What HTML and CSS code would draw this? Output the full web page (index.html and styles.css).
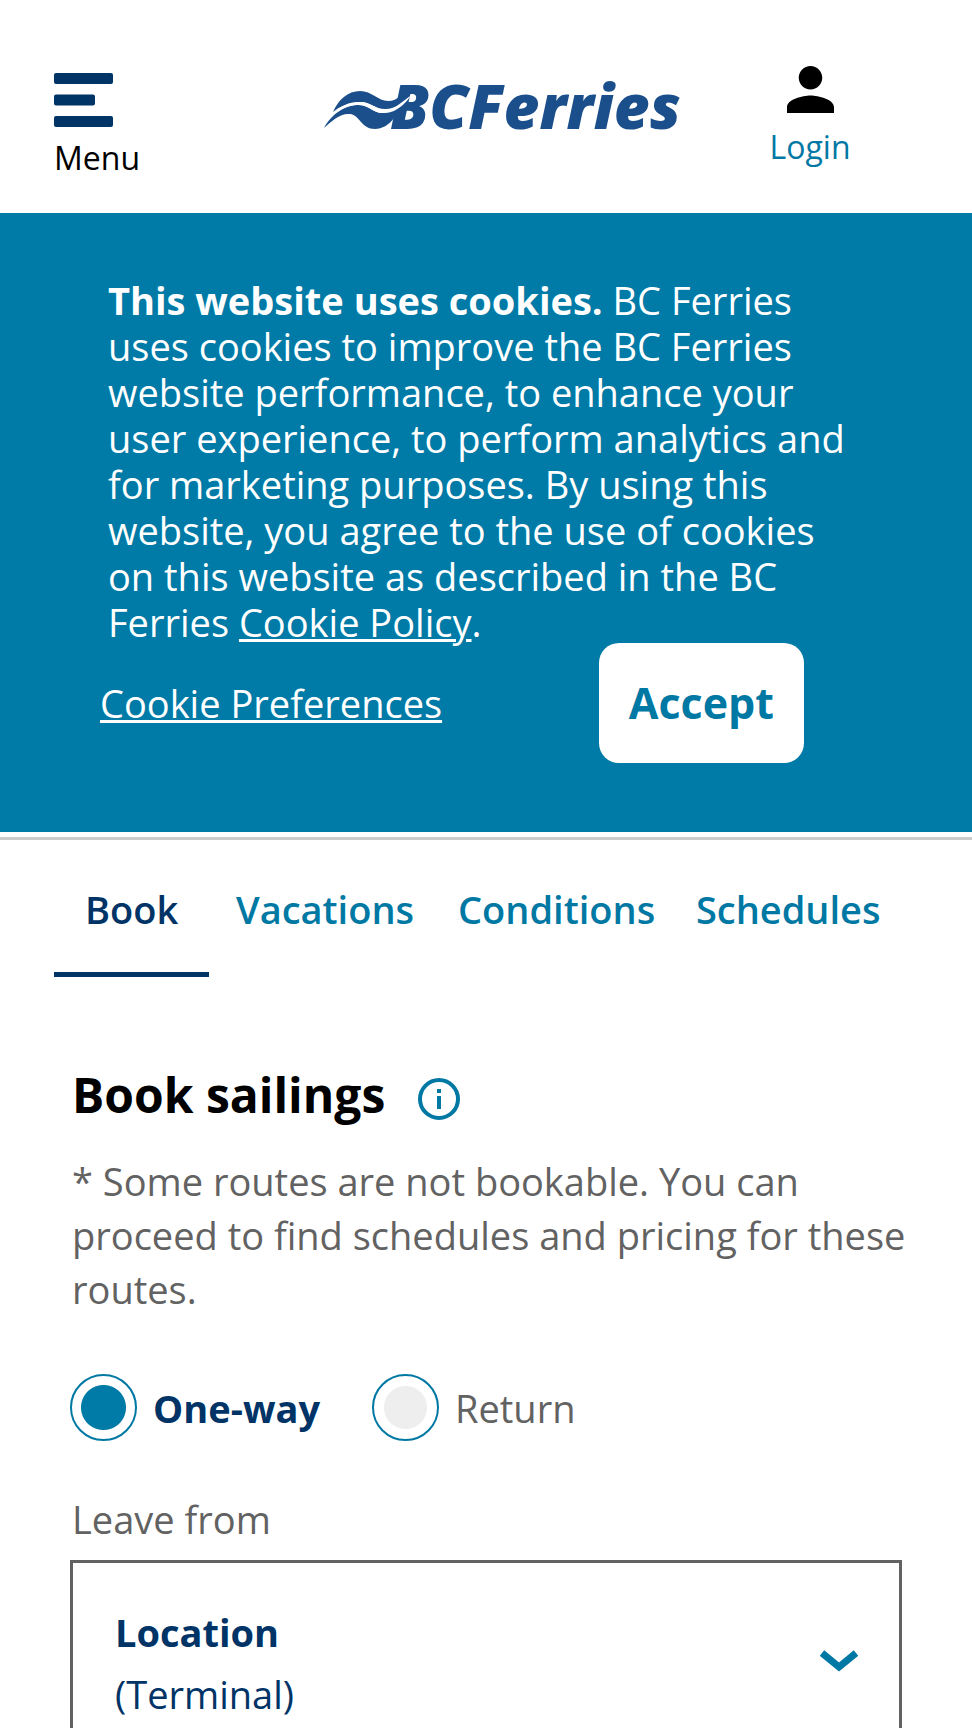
FILE: index.html
```html
<!DOCTYPE html>
<html lang="en">
<head>
  <meta charset="UTF-8">
  <title>BC Ferries</title>
  <meta name="viewport" content="width=device-width, initial-scale=1.0">
  <link rel="stylesheet" href="styles.css">
</head>
<body>

  <header class="header">
    <button type="button" class="menu-btn">
      <svg width="59" height="54" viewBox="0 0 59 54" fill="#003366" aria-hidden="true">
        <rect width="59" height="11" rx="2"/>
        <rect y="21.5" width="41" height="11" rx="2"/>
        <rect y="43" width="59" height="11" rx="2"/>
      </svg>
      <span>Menu</span>
    </button>

    <a href="#" class="logo" aria-label="BC Ferries">
      <svg width="360" height="86" viewBox="0 -16 360 86" fill="#1b4f8b" aria-hidden="true">
        <text class="logo-text" x="68" y="52">BCFerries</text>
        <!-- upper wave -->
        <path d="M11 35 C16 23 26 14 38 14 C50 14 56 24 66 24 C71 24 75 22 78 19 L88 20 C82 24 76 32 65 33 C53 33 49 25 38 25 C26 25 17 30 11 35 Z"/>
        <!-- lower wave -->
        <path d="M2 51 C9 38 22 28 36 28 C47 28 51 36 60 36 C68 36 74 32 80 27 L78 42 L76 52 L71 51 L72 41 C67 48 60 52 53 52 C39 52 38 38 28 37 C18 36 10 44 2 51 Z"/>
        <!-- gap between the waves, cuts into the B -->
        <path d="M10 38 C17 30 27 25 38 25 C49 25 53 32 63 32 C75 32 80 24 90 18 C85 23 77 36 62 36 C50 36 48 28 36 28 C25 28 17 34 10 38 Z" fill="#fff"/>
      </svg>
    </a>

    <a href="#" class="login">
      <svg width="47" height="47" viewBox="4 4 16 16" aria-hidden="true">
        <path d="M12 12c2.21 0 4-1.79 4-4s-1.79-4-4-4-4 1.79-4 4 1.79 4 4 4zm0 2c-2.67 0-8 1.34-8 4v2h16v-2c0-2.66-5.33-4-8-4z"/>
      </svg>
      <span>Login</span>
    </a>
  </header>

  <section class="cookies">
    <p><strong>This website uses cookies.</strong> BC Ferries uses cookies to improve the BC Ferries website performance, to enhance your user experience, to perform analytics and for marketing purposes. By using this website, you agree to the use of cookies on this website as described in the BC Ferries <a href="#">Cookie Policy</a>.</p>
    <div class="cookie-actions">
      <a href="#">Cookie Preferences</a>
      <button type="button" class="accept">Accept</button>
    </div>
  </section>

  <nav class="tabs">
    <a href="#" class="tab active">Book</a>
    <a href="#" class="tab">Vacations</a>
    <a href="#" class="tab">Conditions</a>
    <a href="#" class="tab">Schedules</a>
  </nav>

  <main class="booking">
    <div class="title">
      <h1>Book sailings</h1>
      <button type="button" class="info" aria-label="Booking information">
        <svg width="42" height="42" viewBox="0 0 42 42" fill="#0078a4" aria-hidden="true">
          <circle cx="21" cy="21" r="19" fill="none" stroke="#0078a4" stroke-width="4"/>
          <rect x="19" y="11" width="4" height="4"/>
          <rect x="19" y="18" width="4" height="13"/>
        </svg>
      </button>
    </div>
    <p class="note">* Some routes are not bookable. You can proceed to find schedules and pricing for these routes.</p>

    <div class="trip">
      <input type="radio" name="trip" id="oneway" checked>
      <label for="oneway">One-way</label>
      <input type="radio" name="trip" id="return">
      <label for="return">Return</label>
    </div>

    <label class="field-label" for="leave">Leave from</label>
    <button type="button" class="dropdown" id="leave" aria-haspopup="listbox">
      <span class="place">
        <strong>Location</strong>
        <span>(Terminal)</span>
      </span>
      <svg width="38" height="22" viewBox="0 0 38 22" aria-hidden="true">
        <path d="M2 3 L19 17 L36 3" fill="none" stroke="#0078a4" stroke-width="7"/>
      </svg>
    </button>
  </main>

</body>
</html>
```
FILE: styles.css
```css
* {
  box-sizing: border-box;
}
body {
  margin: 0;
  font-family: "Open Sans", sans-serif;
  font-size: 38px;
  background: #fff;
  color: #000;
}
h1, p {
  margin: 0;
}
a {
  color: #0078a4;
}
button {
  font: inherit;
  color: inherit;
  background: none;
  border: 0;
  padding: 0;
  cursor: pointer;
}
svg {
  display: block;
}

/* header */
.header {
  display: grid;
  grid-template-columns: 1fr 2fr 1fr;
  align-items: start;
  padding: 60px 54px 33px;
  font-size: 32px;
  line-height: 44px;
}
.menu-btn {
  justify-self: start;
  text-align: left;
  padding-top: 13px;
}
.menu-btn span {
  display: block;
  margin-top: 9px;
}
.logo {
  justify-self: center;
  padding: 1px 0 0 32px;
}
.logo-text {
  font-size: 62px;
  font-weight: 800;
  font-style: italic;
}
.login {
  display: flex;
  flex-direction: column;
  align-items: center;
  gap: 12px;
  padding-top: 6px;
  text-decoration: none;
}

/* cookie banner */
.cookies {
  background: #007aa6;
  color: #fff;
  padding: 64px 108px 69px;
  line-height: 46px;
}
.cookies a {
  color: #fff;
  text-decoration-thickness: 3px;
}
.cookie-actions {
  display: flex;
  justify-content: space-between;
  align-items: center;
  margin: -2px 60px 0 -8px;
}
.accept {
  background: #fff;
  color: #0078a4;
  font-size: 43px;
  font-weight: 700;
  padding: 37px 30px;
  border-radius: 20px;
}

/* tabs */
.tabs {
  display: flex;
  margin-top: 5px;
  padding: 42px 68px 0 54px;
  border-top: 3px solid #ccc;
}
.tab {
  flex: 1;
  padding-bottom: 36px;
  font-weight: 600;
  line-height: 54px;
  text-align: center;
  text-decoration: none;
}
.tab.active {
  flex: none;
  padding-left: 31px;
  padding-right: 31px;
  color: #003366;
  border-bottom: 5px solid #003366;
}

/* booking form */
.booking {
  padding: 85px 70px 40px;
  color: #626262;
}
.title {
  display: flex;
  align-items: center;
  gap: 33px;
  padding-left: 2px;
}
.title h1 {
  color: #000;
  font-size: 48px;
  line-height: 66px;
}
.info {
  padding-top: 8px;
}
.note {
  margin: 26px -20px 0 0;
  padding-left: 2px;
  line-height: 54px;
}
.trip {
  display: flex;
  align-items: center;
  margin-top: 58px;
}
.trip input {
  appearance: none;
  width: 67px;
  height: 67px;
  margin: 0 16px 0 0;
  border: 2px solid #0078a4;
  border-radius: 50%;
  background: radial-gradient(circle, #eee 21px, #fff 22px);
}
.trip input:checked {
  background: radial-gradient(circle, #007aa6 22px, #fff 23px);
}
.trip label {
  margin-right: 52px;
}
.trip input:checked + label {
  color: #003366;
  font-weight: 700;
}
.field-label {
  display: block;
  margin-top: 51px;
  padding-left: 2px;
  line-height: 54px;
}
.dropdown {
  display: flex;
  justify-content: space-between;
  align-items: center;
  width: 100%;
  margin-top: 14px;
  padding: 38px 41px 42px 42px;
  border: 3px solid #626262;
  color: #003366;
  text-align: left;
  line-height: 62px;
}
.dropdown svg {
  margin-bottom: 4px;
}
.place strong, .place span {
  display: block;
}
```
